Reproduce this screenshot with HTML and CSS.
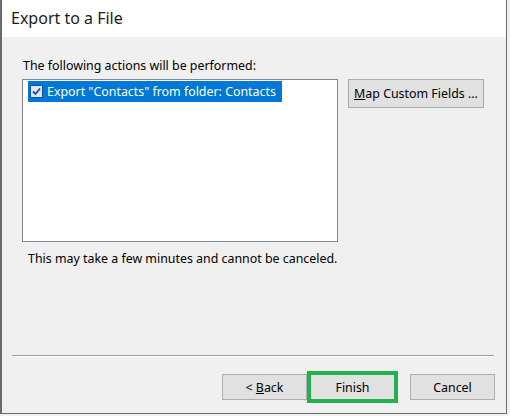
FILE: index.html
```html
<!DOCTYPE html>
<html lang="en">
<head>
<meta charset="utf-8">
<title>Export to a File</title>
<link rel="stylesheet" href="styles.css">
</head>
<body>
<div class="window">
  <header class="titlebar">Export to a File</header>
  <main class="content">
    <p class="label">The following actions will be performed:</p>
    <div class="actions-row">
      <div class="listbox">
        <div class="list-item">
          <span class="check">
            <svg viewBox="0 0 11 11" width="11" height="11"><path d="M2 5.5 L4.5 8 L9 2.5" fill="none" stroke="#1c4fa0" stroke-width="1.8"/></svg>
          </span>
          <span class="item-text">Export "Contacts" from folder: Contacts</span>
        </div>
      </div>
      <button class="btn btn-map"><u>M</u>ap Custom Fields ...</button>
    </div>
    <p class="note">This may take a few minutes and cannot be canceled.</p>
  </main>
  <footer class="footer">
    <hr class="separator">
    <div class="nav-buttons">
      <button class="btn nav">&lt; <u>B</u>ack</button>
      <button class="btn nav finish">Finish</button>
      <button class="btn nav cancel">Cancel</button>
    </div>
  </footer>
</div>
</body>
</html>
```

FILE: styles.css
```css
html, body {
  margin: 0;
  padding: 0;
  background: #f0f0f0;
}

body {
  width: 510px;
  height: 416px;
  overflow: hidden;
  font-family: "Noto Sans", "Open Sans", sans-serif;
  font-size: 12.4px;
  color: #000;
}

.window {
  box-sizing: border-box;
  width: 507px;
  height: 414px;
  border-left: 2px solid #6a6a6a;
  border-right: 1px solid #6a6a6a;
  border-bottom: 1px solid #6a6a6a;
  background: #f0f0f0;
  display: flex;
  flex-direction: column;
}

.titlebar {
  height: 37px;
  background: #fff;
  font-size: 16px;
  line-height: 37px;
  padding-left: 9px;
  color: #1a1a1a;
  flex: none;
}

.content {
  padding: 20px 0 0 20px;
  flex: 1;
}

.label {
  margin: 0 0 5px 1px;
  line-height: 17px;
}

.actions-row {
  display: flex;
  align-items: flex-start;
  gap: 10px;
}

.listbox {
  box-sizing: border-box;
  width: 316px;
  height: 163px;
  background: #fff;
  border: 1px solid #828790;
  padding: 1px 0 0 5px;
}

.list-item {
  display: inline-flex;
  align-items: center;
  height: 21px;
  background: #0078d7;
  padding: 0 6px 0 2px;
  gap: 4px;
}

.check {
  box-sizing: border-box;
  width: 13px;
  height: 13px;
  background: #dfe9f5;
  border: 1px solid #1c4fa0;
  display: flex;
  align-items: center;
  justify-content: center;
}

.check svg {
  display: block;
}

.item-text {
  color: #fff;
  white-space: nowrap;
}

.btn {
  box-sizing: border-box;
  font: inherit;
  color: #000;
  background: #e1e1e1;
  border: 1px solid #adadad;
  padding: 0;
  margin: 0;
}

.btn-map {
  width: 136px;
  height: 29px;
}

.note {
  margin: 8px 0 0 6px;
  line-height: 17px;
}

.footer {
  flex: none;
  height: 58px;
  padding: 0 10px 0 10px;
}

.separator {
  margin: 0 2px 0 0;
  border: none;
  border-top: 1px solid #a0a0a0;
  border-bottom: 1px solid #fff;
  height: 0;
}

.nav-buttons {
  display: flex;
  justify-content: flex-end;
  margin-top: 17px;
  padding-right: 1px;
}

.nav {
  width: 85px;
  height: 26px;
}

.finish {
  margin-left: 3px;
  outline: 4px solid #22b14c;
  outline-offset: -1px;
}

.cancel {
  margin-left: 15px;
}
```
